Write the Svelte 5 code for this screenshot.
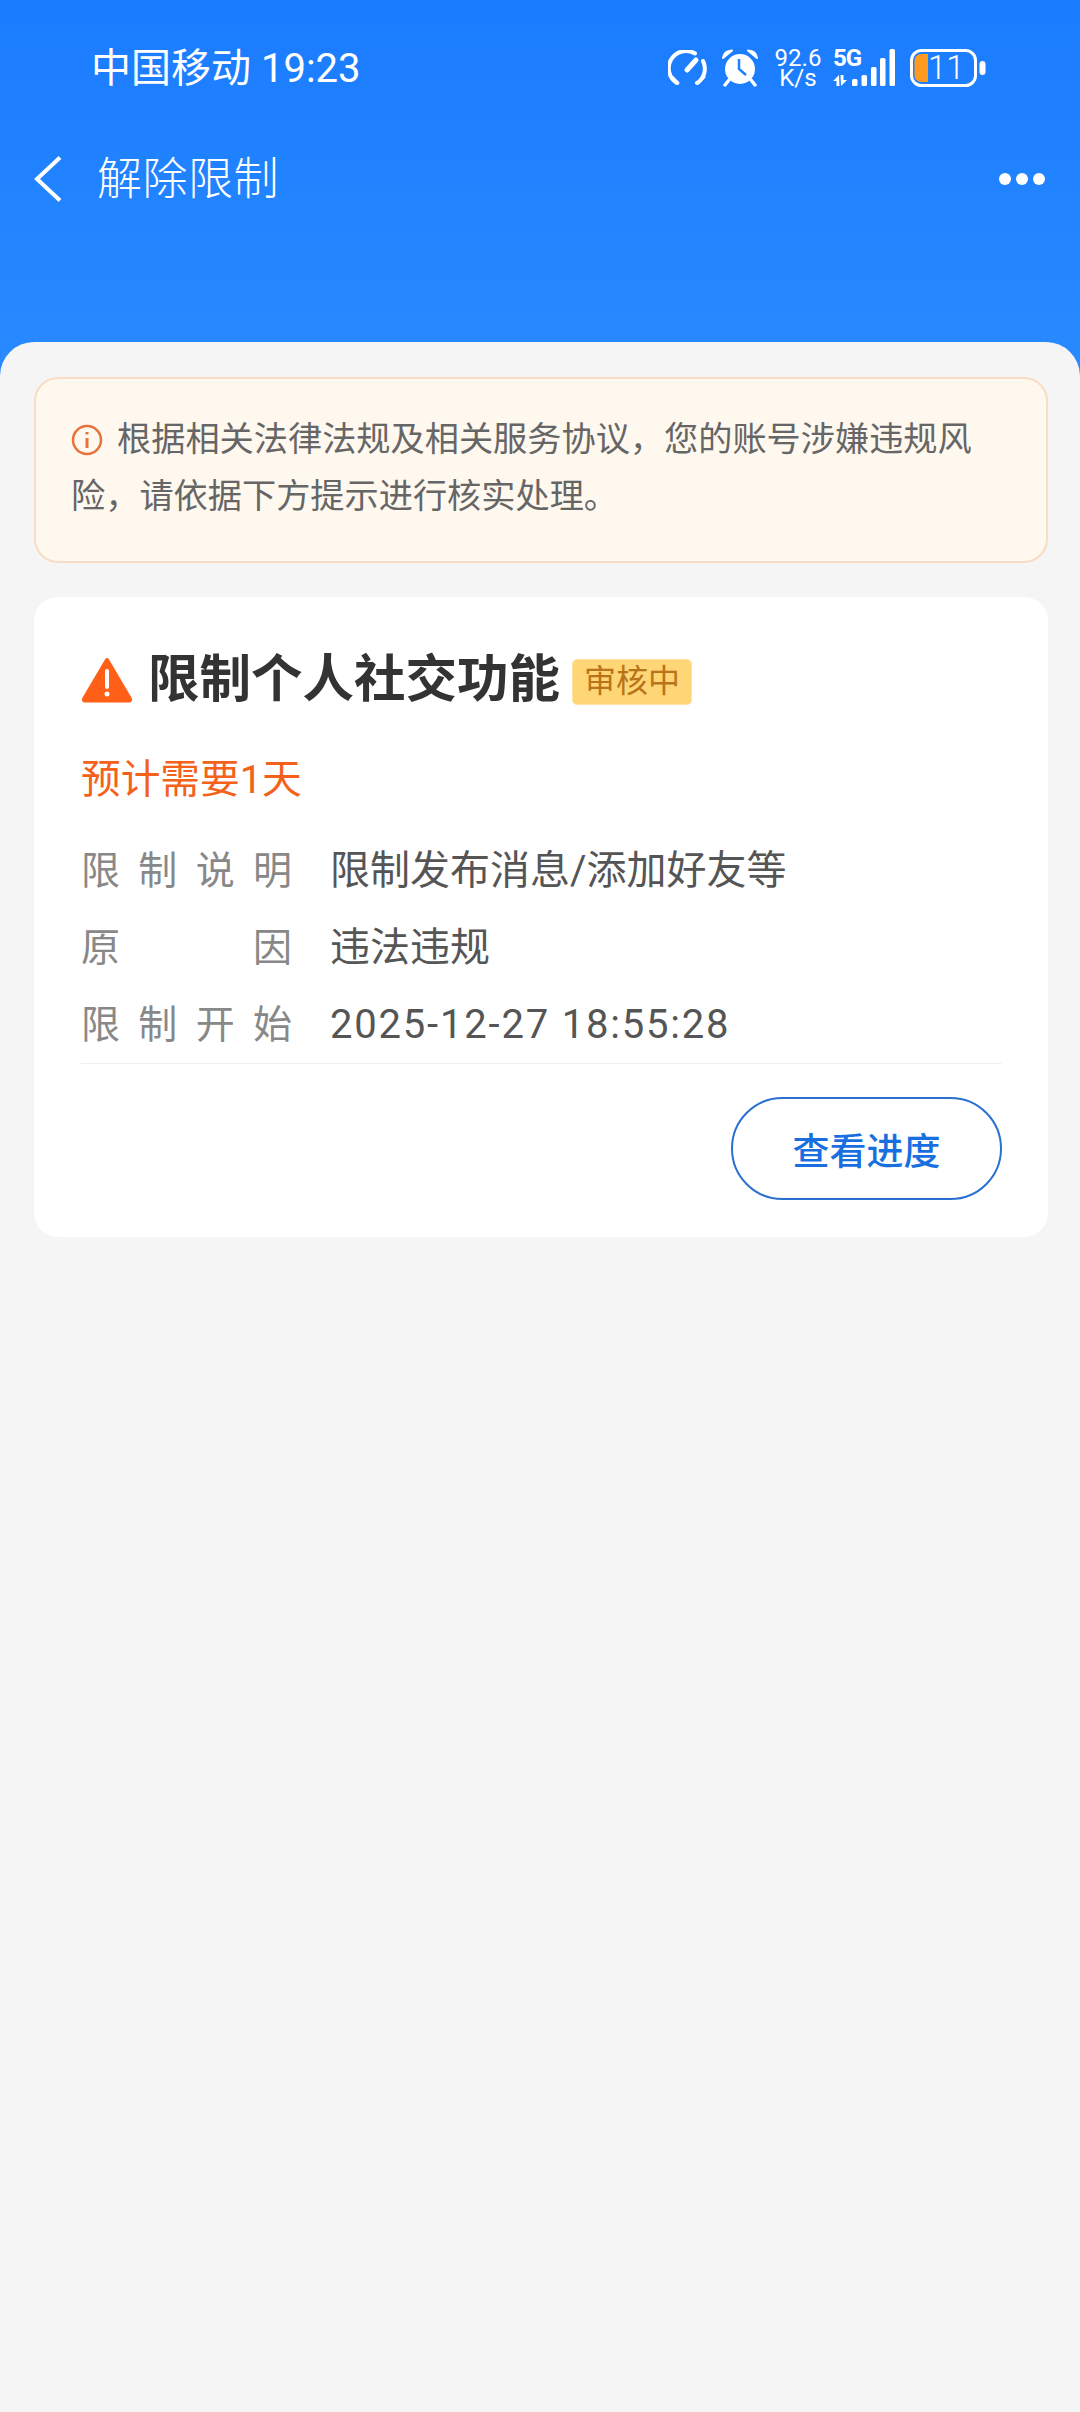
<script>
	const rows = [
		{ label: '限制说明', value: '限制发布消息/添加好友等' },
		{ label: '原因', value: '违法违规' },
		{ label: '限制开始', value: '2025-12-27 18:55:28', wide: true }
	];
	const bars = [
		{ x: 19, y: 30, h: 7 },
		{ x: 28.500, y: 26, h: 11 },
		{ x: 38, y: 18, h: 19 },
		{ x: 47, y: 9, h: 28 },
		{ x: 56.500, y: 0, h: 37 }
	];
</script>

<div class="page">
	<header class="header">
		<div class="status">
			<span class="carrier">中国移动 19:23</span>
			<div class="status-icons">
				<svg class="gauge" width="40" height="36" viewBox="0 0 40 36" fill="none" stroke="#fff" stroke-width="4" stroke-linecap="round">
					<path d="M9 33 A17 17 0 0 1 27 3.5" />
					<path d="M35 11 A17 17 0 0 1 29 33" />
					<path d="M28 10 L19 20" stroke-width="5" />
					<path d="M4 27 L10 33 M30 33 L36 27" stroke-width="3" />
				</svg>
				<svg class="alarm" width="38" height="38" viewBox="0 0 38 38">
					<circle cx="19" cy="20" r="15" fill="#fff" />
					<path d="M2 9 Q3 2 11 1.500 Z M36 9 Q35 2 27 1.500 Z" fill="#fff" stroke="#fff" stroke-width="2" stroke-linejoin="round" />
					<path d="M8 31 L4 36 M30 31 L34 36" stroke="#fff" stroke-width="3.500" stroke-linecap="round" />
					<path d="M18 10 V20 L25 26" fill="none" stroke="#1f80ff" stroke-width="2.500" />
				</svg>
				<div class="speed"><span>92.6</span><span>K/s</span></div>
				<div class="signal">
					<span class="five-g">5G</span>
					<svg width="63" height="38" viewBox="0 0 63 38">
						<path d="M6 26 L0 32 H3.500 V37 H6.500 Z M8 37 L14 31 H10.500 V26 H7.500 Z" fill="#fff" />
						{#each bars as bar}
							<rect x={bar.x} y={bar.y} width="5.500" height={bar.h} rx="1.500" fill="#fff" />
						{/each}
					</svg>
				</div>
				<div class="battery">
					<svg width="76" height="38" viewBox="0 0 76 38">
						<rect x="1.500" y="1.500" width="64" height="35" rx="10" fill="none" stroke="#fff" stroke-width="3" />
						<path d="M11 5 H18 V33 H11 A6.500 6.500 0 0 1 4.500 26.500 V11.500 A6.500 6.500 0 0 1 11 5 Z" fill="#ff9a1f" />
						<rect x="69.500" y="12" width="6" height="14" rx="3" fill="#fff" />
					</svg>
					<span class="level">11</span>
				</div>
			</div>
		</div>
		<div class="nav">
			<svg class="back" width="28" height="46" viewBox="0 0 28 46" fill="none" stroke="#fff" stroke-width="4">
				<path d="M26 1.500 L3 23 L26 44.500" />
			</svg>
			<span class="title">解除限制</span>
			<div class="more"><i></i><i></i><i></i></div>
		</div>
	</header>

	<main class="content">
		<div class="notice">
			<p>
				<svg class="info" width="32" height="32" viewBox="0 0 32 32" fill="none" stroke="#e8733a">
					<circle cx="16" cy="16" r="14" stroke-width="2.500" />
					<path d="M16 14 V24" stroke-width="3" />
					<path d="M16 8 V10.500" stroke-width="3" />
				</svg>根据相关法律法规及相关服务协议，您的账号涉嫌违规风险，请依据下方提示进行核实处理。
			</p>
		</div>

		<section class="card">
			<div class="card-head">
				<svg width="52" height="46" viewBox="0 0 52 46">
					<path d="M26 3 L49 42 a1 1 0 0 1 -1 1.500 H4 a1 1 0 0 1 -1 -1.500 Z" fill="#ff5f17" stroke="#ff5f17" stroke-width="4" stroke-linejoin="round" />
					<path d="M26 14 V30" stroke="#fff" stroke-width="4" stroke-linecap="round" />
					<circle cx="26" cy="37" r="2.500" fill="#fff" />
				</svg>
				<h2>限制个人社交功能</h2>
				<span class="badge">审核中</span>
			</div>
			<div class="estimate">预计需要1天</div>
			<div class="rows">
				{#each rows as row}
					<div class="row">
						<span class="label">{row.label}</span>
						<span class="value" class:wide={row.wide}>{row.value}</span>
					</div>
				{/each}
			</div>
			<div class="actions">
				<button type="button" class="progress">查看进度</button>
			</div>
		</section>
	</main>
</div>

<style>
	:global(body) {
		margin: 0;
		background: #f5f5f5;
	}

	.page {
		min-height: 2412px;
		background: #f5f5f5;
		font-family: Roboto, "Noto Sans CJK SC", sans-serif;
	}

	.header {
		height: 400px;
		margin-bottom: -58px;
		background: linear-gradient(180deg, #1a7cff 0%, #2a8bff 100%);
		color: #fff;
		box-sizing: border-box;
		padding-top: 42px;
	}

	.status {
		display: flex;
		align-items: center;
		justify-content: space-between;
		height: 52px;
		padding: 0 94px 0 91px;
	}

	.carrier {
		margin-top: 2px;
		font-size: 40px;
		line-height: 52px;
	}

	.status-icons {
		display: flex;
		align-items: center;
	}

	.alarm {
		margin-left: 13px;
	}

	.speed {
		display: flex;
		flex-direction: column;
		align-items: center;
		margin-left: 14px;
		width: 50px;
		font-size: 24px;
		line-height: 20px;
	}

	.signal {
		position: relative;
		display: flex;
		margin-left: 10px;
	}

	.five-g {
		position: absolute;
		left: 0;
		top: 0;
		font-size: 24px;
		line-height: 18px;
		font-weight: 700;
		letter-spacing: -1px;
	}

	.battery {
		position: relative;
		display: flex;
		margin-left: 14px;
	}

	.level {
		position: absolute;
		left: 18px;
		top: 3px;
		font-size: 33px;
		line-height: 32px;
		font-weight: 300;
	}

	.nav {
		display: flex;
		align-items: center;
		height: 60px;
		margin-top: 55px;
		padding: 0 35px 0 34px;
	}

	.title {
		margin: 0 0 8px 35px;
		font-size: 45px;
		font-weight: 300;
		letter-spacing: 0.5px;
	}

	.more {
		display: flex;
		gap: 5px;
		margin-left: auto;
	}

	.more i {
		width: 12px;
		height: 12px;
		border-radius: 50%;
		background: #fff;
	}

	.content {
		position: relative;
		padding: 35px 32px 35px 34px;
		background: #f5f5f5;
		border-radius: 34px 34px 0 0;
	}

	.notice {
		box-sizing: border-box;
		height: 186px;
		padding: 32px 34px 0 35px;
		background: #fff8ef;
		border: 2px solid #f8dcc4;
		border-radius: 24px;
	}

	.notice p {
		margin: 0;
		font-size: 34.200px;
		line-height: 57px;
		color: #666;
	}

	.info {
		vertical-align: -5px;
		margin-right: 14px;
	}

	.card {
		box-sizing: border-box;
		height: 640px;
		margin-top: 34px;
		padding: 53px 46px 0 47px;
		background: #fff;
		border-radius: 24px;
	}

	.card-head {
		display: flex;
		align-items: center;
		height: 60px;
	}

	.card-head h2 {
		margin: 0 0 0 15px;
		font-size: 51.500px;
		line-height: 60px;
		font-weight: 700;
		color: #333;
	}

	.badge {
		margin: 4px 0 0 12px;
		padding: 0 11px;
		height: 46px;
		line-height: 43px;
		box-sizing: border-box;
		font-size: 32px;
		color: #b8741a;
		background: #ffd675;
		border: 1px solid #ffe3a6;
		border-radius: 5px;
	}

	.estimate {
		margin-top: 45px;
		font-size: 39.700px;
		line-height: 50px;
		color: #f4611a;
	}

	.rows {
		margin-top: 27px;
		border-bottom: 1px solid #f0f0f0;
	}

	.row {
		display: flex;
		align-items: baseline;
		height: 77px;
		line-height: 77px;
		font-size: 40px;
	}

	.label {
		width: 211px;
		font-size: 39px;
		text-align-last: justify;
		color: #888;
	}

	.value {
		margin-left: 38px;
		color: #555;
	}

	.wide {
		letter-spacing: 1.800px;
	}

	.actions {
		display: flex;
		justify-content: flex-end;
		margin-top: 33px;
	}

	.progress {
		box-sizing: border-box;
		width: 271px;
		height: 103px;
		padding: 0;
		font: inherit;
		font-size: 37px;
		font-weight: 500;
		color: #1a6fe0;
		background: #fff;
		border: 2px solid #2a70d0;
		border-radius: 52px;
	}
</style>
